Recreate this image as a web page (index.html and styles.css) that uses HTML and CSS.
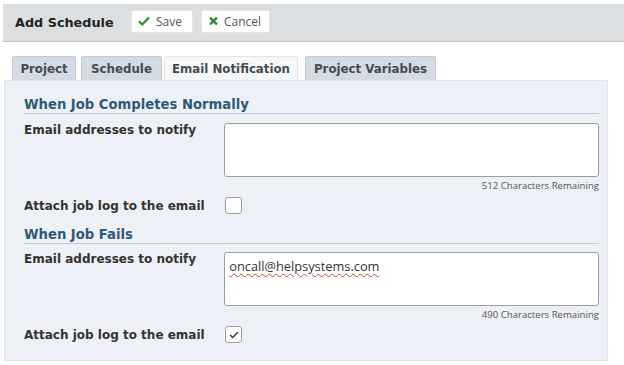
FILE: index.html
```html
<!DOCTYPE html>
<html>
<head>
<meta charset="utf-8">
<link rel="stylesheet" href="styles.css">
</head>
<body>
<div class="topbar">
  <span class="title">Add Schedule</span>
  <button class="btn btn-save"><svg class="ico" viewBox="0 0 12 10" width="12" height="10"><path d="M1 5.2 L4.3 8.4 L11 1.4" fill="none" stroke="#2f8a2f" stroke-width="2.2"/></svg>Save</button>
  <button class="btn btn-cancel"><svg class="ico" viewBox="0 0 10 10" width="9" height="10"><path d="M1.2 1.2 L8.8 8.8 M8.8 1.2 L1.2 8.8" fill="none" stroke="#2f8a2f" stroke-width="2.6"/></svg>Cancel</button>
</div>
<div class="tabs">
  <div class="tab t1">Project</div>
  <div class="tab t2">Schedule</div>
  <div class="tab t3 active">Email Notification</div>
  <div class="tab t4">Project Variables</div>
</div>
<div class="panel">
  <div class="section">
    <div class="heading">When Job Completes Normally</div>
    <div class="row row-email">
      <div class="label">Email addresses to notify</div>
      <div class="field">
        <div class="textarea"></div>
        <div class="remain">512 Characters Remaining</div>
      </div>
    </div>
    <div class="row row-attach">
      <div class="label">Attach job log to the email</div>
      <div class="check"></div>
    </div>
  </div>
  <div class="section s2">
    <div class="heading">When Job Fails</div>
    <div class="row row-email">
      <div class="label">Email addresses to notify</div>
      <div class="field">
        <div class="textarea"><span class="typed">oncall@helpsystems.com</span></div>
        <div class="remain">490 Characters Remaining</div>
      </div>
    </div>
    <div class="row row-attach">
      <div class="label">Attach job log to the email</div>
      <div class="check checked"><svg viewBox="0 0 12 10" width="10" height="8"><path d="M1.2 5 L4.3 8 L10.8 1.5" fill="none" stroke="#333" stroke-width="1.8"/></svg></div>
    </div>
  </div>
</div>
</body>
</html>
```

FILE: styles.css
```css
* { box-sizing: border-box; }
body {
  margin: 0;
  background: #ffffff;
  font-family: "DejaVu Sans", Verdana, sans-serif;
  width: 624px;
  height: 365px;
  overflow: hidden;
}
.topbar {
  margin: 4px 0 0 3px;
  height: 38px;
  background: #dcdfe1;
  border-bottom: 1px solid #c4c7ca;
  display: flex;
  align-items: center;
  padding-left: 12px;
}
.title {
  font-weight: bold;
  font-size: 12.8px;
  color: #222;
  width: 116px;
  margin-top: -1px;
}
.btn {
  height: 23px;
  background: #fff;
  border: 1px solid #e3e5e7;
  border-radius: 2px;
  font-family: "Open Sans", "Noto Sans", sans-serif;
  font-size: 12px;
  color: #555;
  display: flex;
  align-items: center;
  padding: 0 0 0 6px;
  margin-right: 8px;
  margin-top: -3px;
}
.btn-save { width: 62px; }
.btn-cancel { width: 69px; padding-left: 7px; }
.ico { margin-right: 6px; }
.tabs {
  display: flex;
  margin-top: 14px;
  padding-left: 12px;
  height: 24px;
  align-items: flex-end;
}
.tab {
  height: 24px;
  background: #d4dbe3;
  border: 1px solid #c3cad3;
  border-bottom: none;
  border-radius: 2px 2px 0 0;
  font-weight: bold;
  font-size: 11.8px;
  color: #444b52;
  display: flex;
  align-items: center;
  justify-content: center;
}
.t1 { width: 64px; margin-right: 5px; }
.t2 { width: 81px; margin-right: 2px; }
.t3 { width: 134px; margin-right: 7px; background: #f6f7f9; border-color: #e2e4e8; }
.t4 { width: 131px; }
.panel {
  margin-left: 4px;
  width: 604px;
  height: 281px;
  background: #eef0f8;
  border: 1px solid #e0e3ea;
  padding: 14px 8px 0 19px;
}
.heading {
  font-weight: bold;
  font-size: 13.2px;
  color: #2e5a78;
  border-bottom: 1px solid #c6cad2;
  padding-top: 1px;
  height: 19px;
  line-height: 17px;
}
.row {
  display: flex;
}
.label {
  width: 201px;
  font-weight: bold;
  font-size: 12px;
  color: #333;
}
.row-email { margin-top: 9px; }
.s2 .row-email { margin-top: 8px; }
.field { width: 376px; }
.textarea {
  height: 54px;
  background: #fff;
  border: 1px solid #9d9d9d;
  border-radius: 3px;
  padding: 3px 4px;
}
.typed {
  font-family: "Open Sans", "Noto Sans", sans-serif;
  font-size: 12.8px;
  color: #333;
  text-decoration: underline wavy #d04040;
  text-decoration-thickness: 1px;
  text-underline-offset: 2px;
}
.remain {
  text-align: right;
  font-family: "Open Sans", "Noto Sans", sans-serif;
  font-size: 9.6px;
  color: #555;
  margin-top: 2px;
  height: 14px;
  line-height: 14px;
}
.row-attach { align-items: center; margin-top: 4px; }
.check {
  width: 17px;
  height: 17px;
  background: #fff;
  border: 1px solid #9d9d9d;
  border-radius: 3px;
  display: flex;
  align-items: center;
  justify-content: center;
}
.s2 { margin-top: 11px; }
```
